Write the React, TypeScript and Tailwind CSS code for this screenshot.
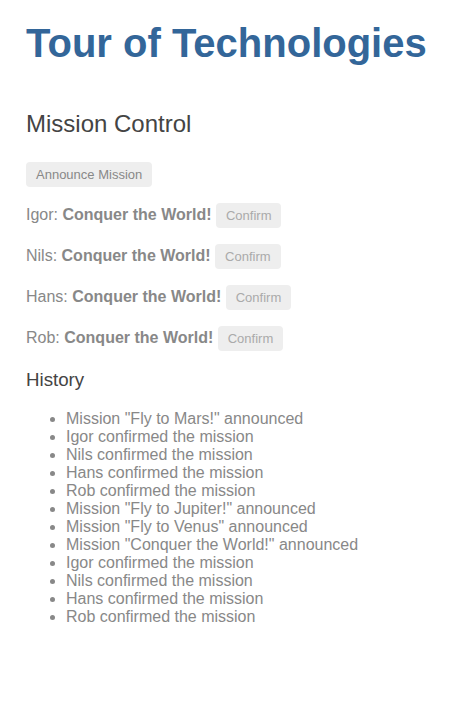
import React from 'react';

export default function App() {
  const crew = ['Igor', 'Nils', 'Hans', 'Rob'];
  const history = [
    'Mission "Fly to Mars!" announced',
    'Igor confirmed the mission',
    'Nils confirmed the mission',
    'Hans confirmed the mission',
    'Rob confirmed the mission',
    'Mission "Fly to Jupiter!" announced',
    'Mission "Fly to Venus" announced',
    'Mission "Conquer the World!" announced',
    'Igor confirmed the mission',
    'Nils confirmed the mission',
    'Hans confirmed the mission',
    'Rob confirmed the mission'
  ];

  return (
    <div className="min-h-screen bg-white px-[26px] pt-[21px] pb-8 font-['Liberation_Sans',Arial,sans-serif] text-[16px] leading-[normal] text-[#888]">
      <h1 className="text-[40px] font-bold leading-[normal] text-[#369]">Tour of Technologies</h1>

      <h2 className="mt-[44px] text-[24px] font-normal leading-[normal] text-[#444]">Mission Control</h2>
      <div className="mt-[23.7px]">
        <button className="rounded-[4px] bg-[#eee] px-[10px] py-[5px] text-[13px] leading-[normal] text-[#888]">
          Announce Mission
        </button>
      </div>

      {crew.map((name) => (
        <p key={name} className="mt-4">
          {name}: <strong className="font-bold">Conquer the World!</strong>{' '}
          <button disabled className="rounded-[4px] bg-[#eee] px-[10px] py-[5px] text-[13px] leading-[normal] text-[#aaa]">
            Confirm
          </button>
        </p>
      ))}

      <h3 className="mt-[18.72px] text-[18.72px] font-normal leading-[normal] text-[#444]">History</h3>
      <ul className="mt-[18.72px] list-disc pl-10">
        {history.map((item, i) => (
          <li key={i}>{item}</li>
        ))}
      </ul>
    </div>
  );
}
